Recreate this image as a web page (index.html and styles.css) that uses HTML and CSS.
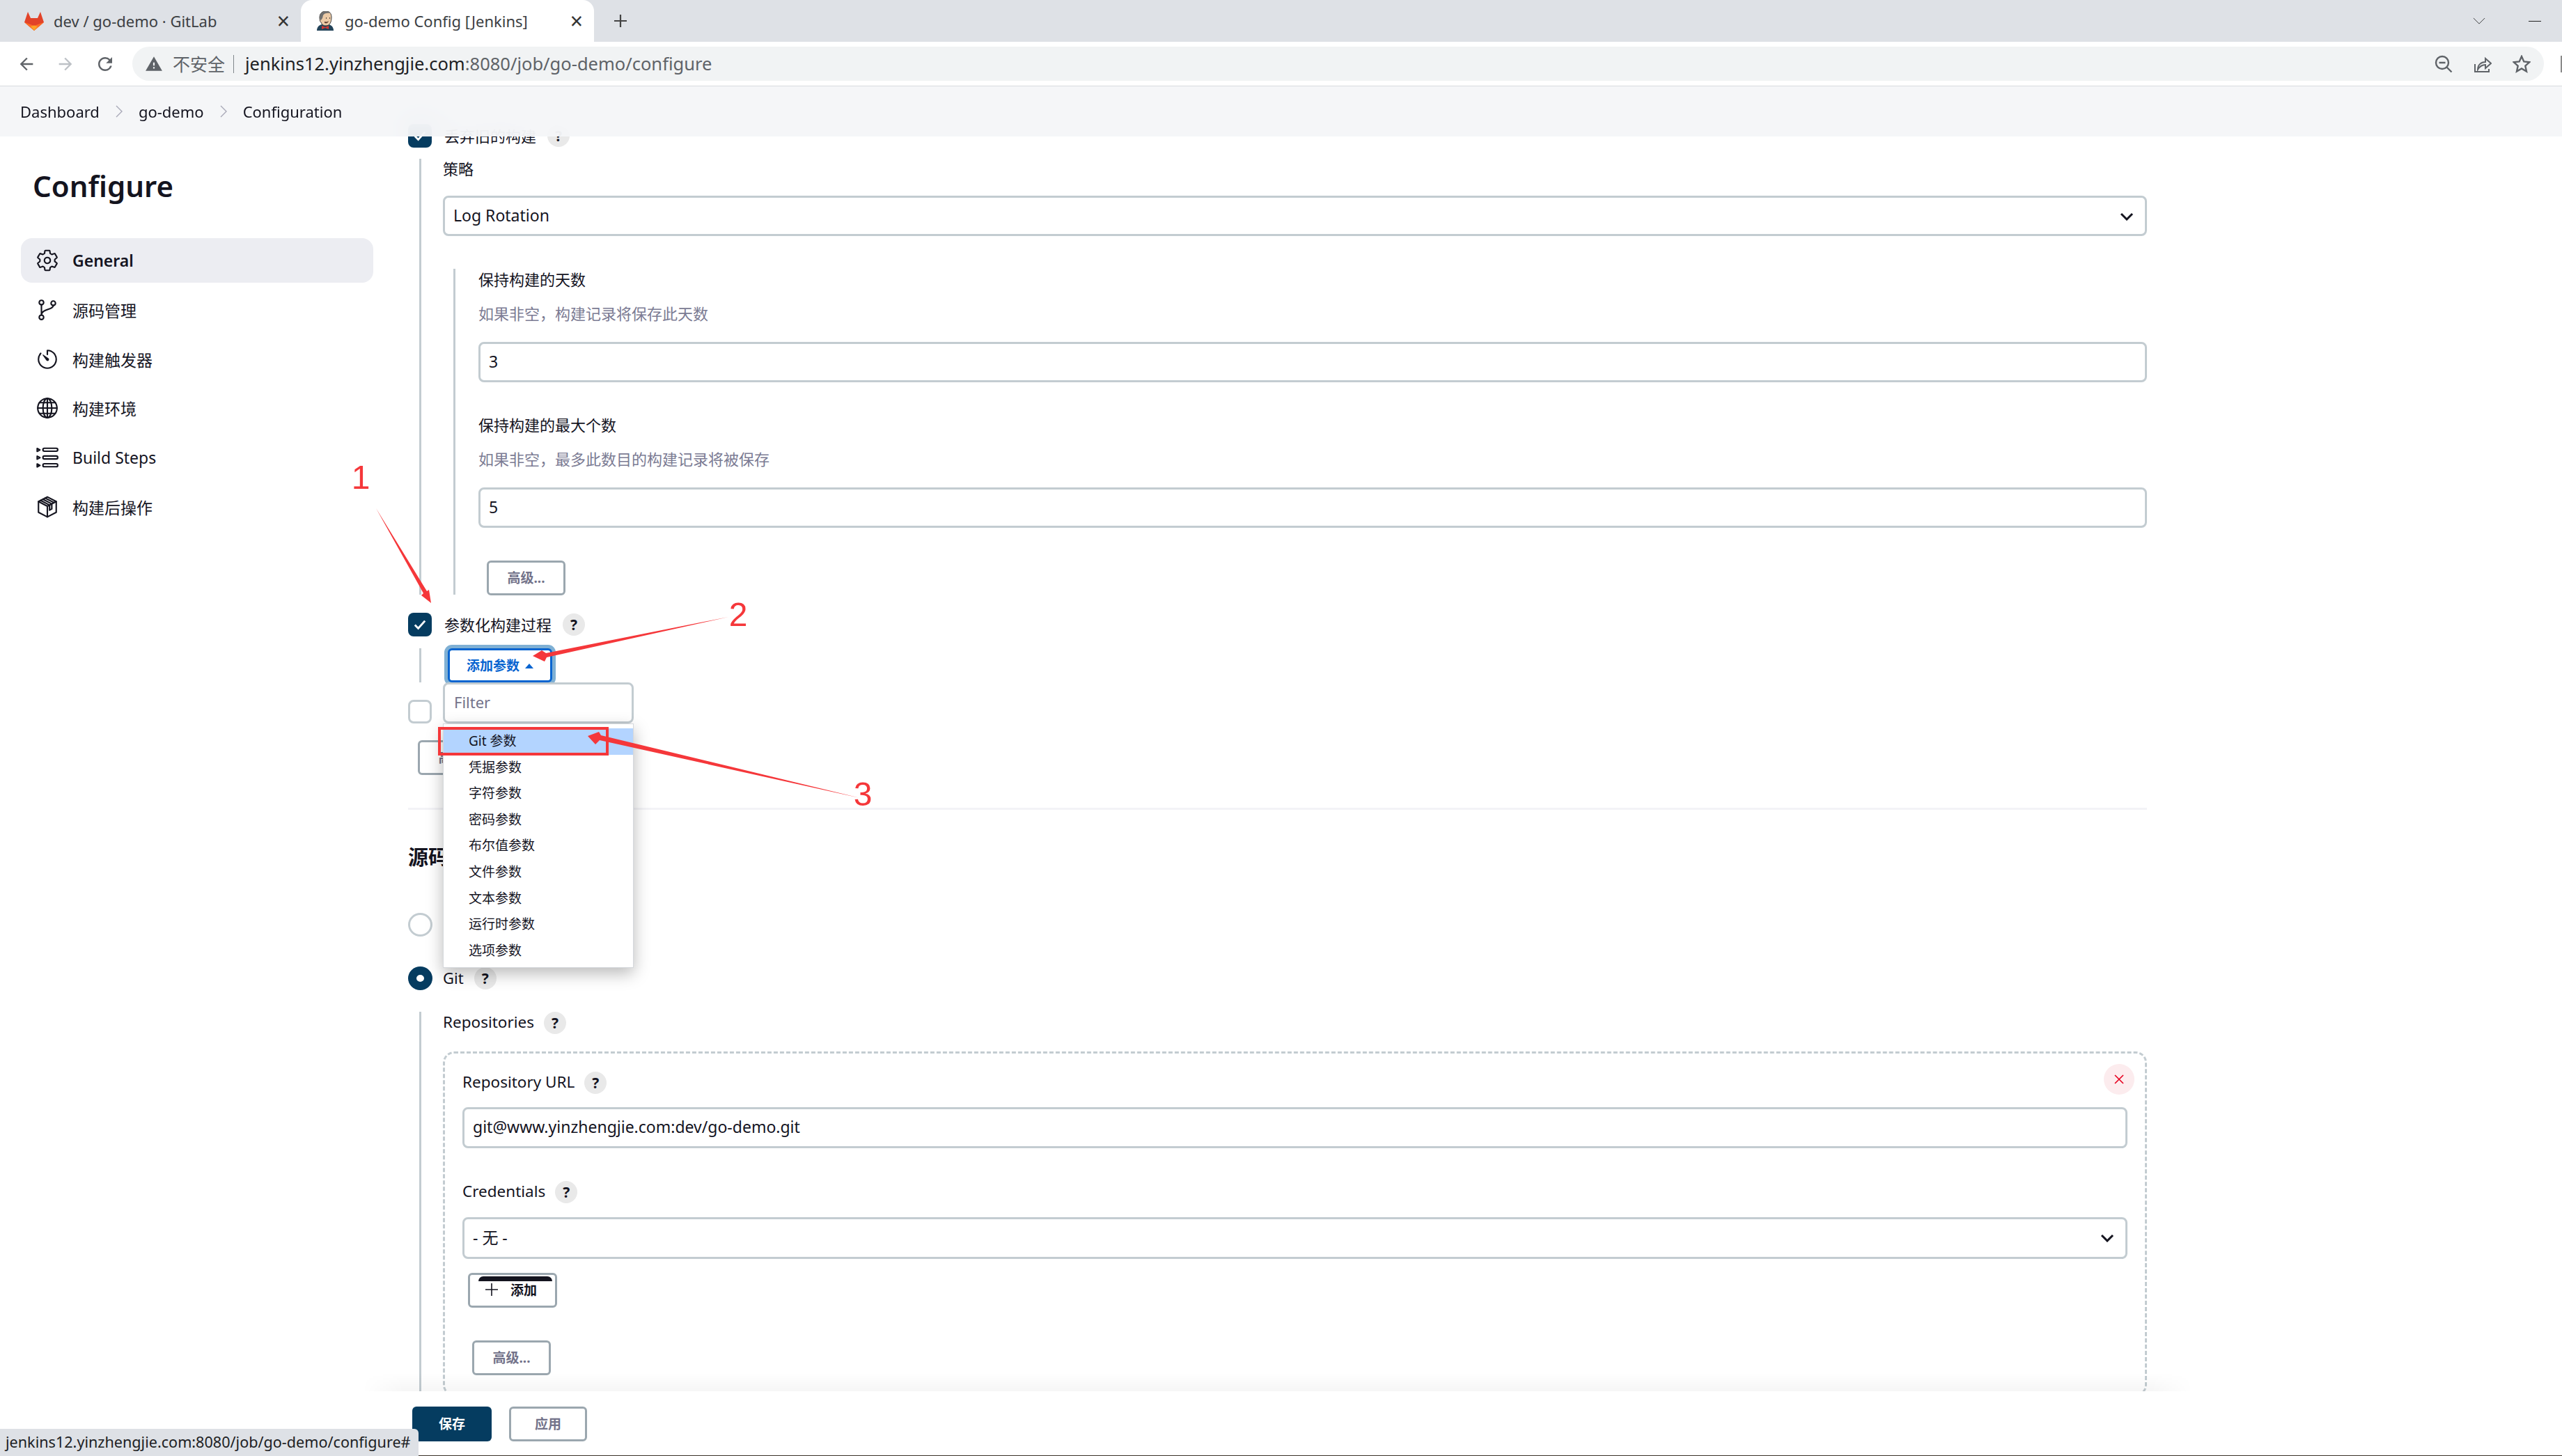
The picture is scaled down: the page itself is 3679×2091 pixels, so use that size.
FILE: index.html
```html
<!DOCTYPE html>
<html lang="zh-CN">
<head>
    <meta charset="UTF-8">
    <title>go-demo Config [Jenkins]</title>
    <link rel="stylesheet" href="styles.css">
</head>
<body>
    <div class="tabbar">
        <div class="tab tab-first">
            <svg class="favicon" viewBox="0 0 28 27"><path d="M5 0l4 9h10l4-9 5 15-14 12L0 15z" fill="#e24329"/><path d="M0 15l14 5 14-5-14 12z" fill="#fc6d26"/><path d="M9 21l5-1.5 5 1.5-5 6z" fill="#fca326"/></svg>
            <span class="tab-title">dev / go-demo · GitLab</span>
            <span class="tab-close">×</span>
        </div>
        <div class="tab tab-active">
            <svg class="favicon jenkins" viewBox="0 0 24 28"><path d="M0 28c0-5 3-8 7-9h10c4 1 7 4 7 9z" fill="#23445a"/><path d="M4 9C4 3 8 0 13 0s8 3 8 9c0 6-2 12-8 12-4 0-6-2-7-5-1 0-2-3-2-7z" fill="#eccaa6" stroke="#3c3c3c" stroke-width="1"/><path d="M4 11C3 4 8 0 13 0c3 0 5 1 6 3-4-1-9 0-10 3l-1 4-2 3z" fill="#6f6f6f"/><path d="M11 15c3 1 5 0 6-1-1 3-3 4-6 3z" fill="#5a3a2c"/><path d="M13 10h1M18 10h1" stroke="#222" stroke-width="1.4"/><path d="M7 21l5 2 5-2v5l-5-2-5 2z" fill="#d33833"/></svg>
            <span class="tab-title">go-demo Config [Jenkins]</span>
            <span class="tab-close">×</span>
        </div>
        <svg class="tab-plus" viewBox="0 0 20 20"><path d="M10 1v18M1 10h18" stroke="#444" stroke-width="2.2"/></svg>
        <div class="window-controls">
            <svg class="tab-list" viewBox="0 0 20 12"><path d="M1 1l9 9 9-9" fill="none" stroke="#333" stroke-width="1"/></svg>
            <span class="minimize"></span>
        </div>
    </div>

    <div class="addressbar">
        <svg class="nav-icon" viewBox="0 0 24 24" fill="#5f6368"><path d="M20 11H7.83l5.59-5.59L12 4l-8 8 8 8 1.41-1.41L7.83 13H20v-2z"/></svg>
        <svg class="nav-icon" viewBox="0 0 24 24" fill="#bdc1c6"><path d="M12 4l-1.41 1.41L16.17 11H4v2h12.17l-5.58 5.59L12 20l8-8z"/></svg>
        <svg class="nav-icon reload" viewBox="0 0 24 24" fill="#5f6368"><path d="M17.65 6.35A7.958 7.958 0 0012 4c-4.42 0-7.99 3.58-7.99 8s3.57 8 7.99 8c3.73 0 6.84-2.55 7.73-6h-2.08A5.99 5.99 0 0112 18c-3.31 0-6-2.69-6-6s2.69-6 6-6c1.66 0 3.14.69 4.22 1.78L13 11h7V4l-2.35 2.35z"/></svg>
        <div class="omnibox">
            <svg class="warn" viewBox="0 0 24 24" fill="#5f6368"><path d="M1 21h22L12 2 1 21zm12-3h-2v-2h2v2zm0-4h-2v-4h2v4z"/></svg>
            <span class="insecure">不安全</span>
            <span class="omni-sep"></span>
            <span class="url">jenkins12.yinzhengjie.com<span class="url-rest">:8080/job/go-demo/configure</span></span>
            <div class="omni-icons">
                <svg viewBox="0 0 26 26"><circle cx="11" cy="11" r="9" fill="none" stroke="#5f6368" stroke-width="2.4"/><path d="M6.5 11h9M17.5 17.5l7 7" stroke="#5f6368" stroke-width="2.4"/></svg>
                <svg viewBox="0 0 26 26"><path d="M2 13v11h20v-4" fill="none" stroke="#5f6368" stroke-width="2"/><path d="M6 21c0-7 5-11 11-11V5l8 7-8 7v-5c-5 0-8 2-11 7z" fill="none" stroke="#5f6368" stroke-width="2"/></svg>
                <svg viewBox="0 0 26 26"><path d="M13 2l3.3 7.4 8 .8-6 5.4 1.7 7.9-7-4-7 4 1.7-7.9-6-5.4 8-.8z" fill="none" stroke="#5f6368" stroke-width="2.4"/></svg>
            </div>
        </div>
        <span class="menu-stub"></span>
    </div>

    <div class="page">
        <div class="breadcrumb">
            <span>Dashboard</span>
            <svg class="crumb-sep" viewBox="0 0 10 18"><path d="M1 1l8 8-8 8" fill="none" stroke="#a9a9b8" stroke-width="1.4"/></svg>
            <span>go-demo</span>
            <svg class="crumb-sep" viewBox="0 0 10 18"><path d="M1 1l8 8-8 8" fill="none" stroke="#a9a9b8" stroke-width="1.4"/></svg>
            <span>Configuration</span>
        </div>

        <aside class="sidebar">
            <h1>Configure</h1>
            <ul class="side-nav">
                <li class="active">
                    <svg viewBox="0 0 512 512"><path d="M262.29 192.31a64 64 0 1057.4 57.4 64.13 64.13 0 00-57.4-57.4zM416.39 256a154.34 154.34 0 01-1.53 20.79l45.21 35.46a10.81 10.81 0 012.45 13.75l-42.77 74a10.81 10.81 0 01-13.14 4.59l-44.9-18.08a16.11 16.11 0 00-15.17 1.75A164.48 164.48 0 01325 400.8a15.94 15.94 0 00-8.82 12.14l-6.73 47.89a11.08 11.08 0 01-10.68 9.17h-85.54a11.11 11.11 0 01-10.69-8.87l-6.72-47.82a16.07 16.07 0 00-9-12.22 155.3 155.3 0 01-21.46-12.57 16 16 0 00-15.11-1.71l-44.89 18.07a10.81 10.81 0 01-13.14-4.58l-42.77-74a10.8 10.8 0 012.45-13.75l38.21-30a16.05 16.05 0 006-14.08c-.36-4.17-.58-8.33-.58-12.5s.21-8.27.58-12.35a16 16 0 00-6.07-13.94l-38.19-30A10.81 10.81 0 0149.48 186l42.77-74a10.81 10.81 0 0113.14-4.59l44.9 18.08a16.11 16.11 0 0015.17-1.75A164.48 164.48 0 01187 111.2a15.94 15.94 0 008.82-12.14l6.73-47.89A11.08 11.08 0 01213.23 42h85.54a11.11 11.11 0 0110.69 8.87l6.72 47.82a16.07 16.07 0 009 12.22 155.3 155.3 0 0121.46 12.57 16 16 0 0015.11 1.71l44.89-18.07a10.81 10.81 0 0113.14 4.58l42.77 74a10.8 10.8 0 01-2.45 13.75l-38.21 30a16.05 16.05 0 00-6.05 14.08c.33 4.14.55 8.3.55 12.47z"/></svg>
                    <span>General</span>
                </li>
                <li>
                    <svg viewBox="0 0 512 512"><circle cx="128" cy="416" r="48"/><circle cx="128" cy="96" r="48"/><circle cx="384" cy="112" r="48"/><path d="M128 144v224M384 160c0 100-256 70-256 208"/></svg>
                    <span>源码管理</span>
                </li>
                <li>
                    <svg viewBox="0 0 512 512"><path d="M112.91 128A191.85 191.85 0 0064 254c-1.18 106.35 85.65 193.8 192 194 106.2.2 192-85.83 192-192 0-104.54-83.55-189.61-187.5-192a4.36 4.36 0 00-4.5 4.37V152"/><path class="solid" d="M233.38 278.63l-79-113a8.13 8.13 0 0111.32-11.32l113 79a32.5 32.5 0 01-37.25 53.26 33.21 33.21 0 01-8.07-7.94z"/></svg>
                    <span>构建触发器</span>
                </li>
                <li>
                    <svg viewBox="0 0 512 512"><circle cx="256" cy="256" r="208"/><ellipse cx="256" cy="256" rx="96" ry="208"/><path d="M256 48v416M48 256h416M85 140h342M85 372h342"/></svg>
                    <span>构建环境</span>
                </li>
                <li>
                    <svg viewBox="0 0 512 512"><rect x="160" y="56" width="320" height="64" rx="32"/><rect x="160" y="224" width="320" height="64" rx="32"/><rect x="160" y="392" width="320" height="64" rx="32"/><path d="M36 60l60 32-60 32zM36 228l60 32-60 32zM36 396l60 32-60 32z"/></svg>
                    <span>Build Steps</span>
                </li>
                <li>
                    <svg viewBox="0 0 512 512"><path d="M256 40 64 140v232l192 100 192-100V140z"/><path d="M64 140l192 100 192-100M256 240v232M160 90l192 100v110l-48 26V216L112 116M208 64l192 100"/></svg>
                    <span>构建后操作</span>
                </li>
            </ul>
        </aside>

        <main class="config">
            <div class="check-row">
                <span class="checkbox checked"><svg viewBox="0 0 20 20"><path d="M4 10.5l4 4 8-9" fill="none" stroke="#fff" stroke-width="2.4"/></svg></span>
                <span class="row-text">丢弃旧的构建</span>
                <span class="help">?</span>
            </div>

            <div class="indent rotate-block">
                <div class="field-label">策略</div>
                <div class="select select-strategy">
                    <select><option>Log Rotation</option></select>
                    <svg viewBox="0 0 20 12"><path d="M2 2l8 8 8-8" fill="none" stroke="#14141f" stroke-width="3"/></svg>
                </div>
                <div class="inner">
                    <div class="inner-label">保持构建的天数</div>
                    <div class="hint">如果非空，构建记录将保存此天数</div>
                    <input class="text-input inner-input" type="text" value="3">
                    <div class="inner-label second">保持构建的最大个数</div>
                    <div class="hint">如果非空，最多此数目的构建记录将被保存</div>
                    <input class="text-input inner-input" type="text" value="5">
                    <button class="btn advanced inner-advanced">高级...</button>
                </div>
            </div>

            <div class="check-row param-row">
                <span class="checkbox checked"><svg viewBox="0 0 20 20"><path d="M4 10.5l4 4 8-9" fill="none" stroke="#fff" stroke-width="2.4"/></svg></span>
                <span class="row-text">参数化构建过程</span>
                <span class="help">?</span>
            </div>

            <div class="indent param-block">
                <button class="btn add-param">添加参数<i class="caret"></i></button>
                <div class="dropdown">
                    <input class="filter" type="text" placeholder="Filter">
                    <ul class="dropdown-menu">
                        <li class="hover">Git 参数</li>
                        <li>凭据参数</li>
                        <li>字符参数</li>
                        <li>密码参数</li>
                        <li>布尔值参数</li>
                        <li>文件参数</li>
                        <li>文本参数</li>
                        <li>运行时参数</li>
                        <li>选项参数</li>
                    </ul>
                </div>
            </div>

            <div class="check-row unchecked-row">
                <span class="checkbox"></span>
            </div>
            <button class="btn advanced hidden-advanced">高级...</button>

            <div class="divider"></div>
            <h2 class="section-title">源码管理</h2>

            <div class="check-row radio-none">
                <span class="radio"></span>
            </div>
            <div class="check-row radio-git">
                <span class="radio selected"></span>
                <span class="row-text">Git</span>
                <span class="help">?</span>
            </div>

            <div class="indent git-block">
                <div class="label-row"><span class="row-text">Repositories</span> <span class="help">?</span></div>
                <div class="repo-box">
                    <span class="repo-close"><svg viewBox="0 0 14 14"><path d="M1 1l12 12M13 1L1 13" stroke="#e6001f" stroke-width="1.6"/></svg></span>
                    <div class="label-row"><span class="row-text">Repository URL</span> <span class="help">?</span></div>
                    <input class="text-input repo-url" type="text" value="git@www.yinzhengjie.com:dev/go-demo.git">
                    <div class="label-row cred-label"><span class="row-text">Credentials</span> <span class="help">?</span></div>
                    <div class="select select-cred">
                        <select><option>- 无 -</option></select>
                        <svg viewBox="0 0 20 12"><path d="M2 2l8 8 8-8" fill="none" stroke="#14141f" stroke-width="3"/></svg>
                    </div>
                    <button class="btn add-cred"><svg viewBox="0 0 18 18"><path d="M9 0v18M0 9h18" stroke="#14141f" stroke-width="1.6"/></svg>添加</button>
                    <button class="btn advanced repo-advanced">高级...</button>
                </div>
            </div>
        </main>
    </div>

    <footer class="bottom-bar">
        <button class="btn save">保存</button>
        <button class="btn advanced apply">应用</button>
    </footer>

    <div class="status-bubble">jenkins12.yinzhengjie.com:8080/job/go-demo/configure#</div>

    <!-- 截图上的红色标注 -->
    <svg class="notes" viewBox="0 0 3679 2091">
        <text x="518" y="702">1</text>
        <text x="1060" y="899">2</text>
        <text x="1239" y="1157">3</text>
        <path d="M540 730 L613 849 L616 847 L619 866 L605 855 L608 852 Z"/>
        <path d="M1046 886 L784 938 L778 934 L765 942 L782 950 L785 944 Z"/>
        <path d="M1235 1146 L863 1056 L860 1051 L844 1057 L855 1069 L861 1063 Z"/>
        <rect x="631" y="1046" width="241" height="37"/>
    </svg>
</body>
</html>
```

FILE: styles.css
```css
* {
    box-sizing: border-box;
    margin: 0;
    padding: 0;
}

body {
    width: 3679px;
    height: 2091px;
    overflow: hidden;
    position: relative;
    display: flex;
    flex-direction: column;
    background: #fff;
    color: #14141f;
    font-family: "Noto Sans", "Noto Sans CJK SC", sans-serif;
    font-size: 22px;
}

/* browser chrome */
.tabbar {
    height: 60px;
    flex: none;
    display: flex;
    align-items: center;
    background: #dee1e6;
}

.tab {
    height: 60px;
    display: flex;
    align-items: center;
    font-size: 22px;
    color: #3c4043;
    position: relative;
}

.tab-first {
    width: 432px;
    padding-left: 35px;
}

.tab-active {
    width: 421px;
    padding-left: 23px;
    background: #fff;
    border-radius: 16px 16px 0 0;
}

.favicon {
    width: 28px;
    height: 27px;
    margin: 0 14px 0 0;
    flex: none;
    position: relative;
    top: 0;
}

.favicon.jenkins {
    width: 24px;
    height: 28px;
    margin-right: 16px;
}

.tab-close {
    position: absolute;
    right: 16px;
    top: 12px;
    font-size: 32px;
    line-height: 36px;
    color: #333;
}

.tab-plus {
    width: 20px;
    height: 20px;
    margin-left: 28px;
}

.window-controls {
    margin-left: auto;
    display: flex;
    align-items: center;
    padding-right: 30px;
    gap: 62px;
}

.tab-list {
    width: 18px;
    height: 11px;
}

.minimize {
    width: 18px;
    height: 1px;
    background: #222;
}

.addressbar {
    height: 64px;
    flex: none;
    display: flex;
    align-items: center;
    padding-left: 24px;
    border-bottom: 1px solid #d8dade;
    background: #fff;
}

.nav-icon {
    width: 28px;
    height: 28px;
    margin-right: 28px;
    flex: none;
}

.nav-icon.reload {
    width: 30px;
    height: 30px;
    margin-right: 24px;
}

.omnibox {
    width: 3463px;
    height: 49px;
    display: flex;
    align-items: center;
    padding-left: 18px;
    border-radius: 25px;
    background: #f1f3f4;
}

.warn {
    width: 26px;
    height: 26px;
    margin-right: 14px;
}

.insecure {
    color: #5f6368;
    font-size: 25px;
    padding-bottom: 2px;
}

.omni-sep {
    width: 1px;
    height: 26px;
    margin: 0 16px 0 12px;
    background: #80868b;
}

.url {
    color: #202124;
    font-size: 25.5px;
    padding-bottom: 2px;
}

.url-rest {
    color: #5f6368;
}

.omni-icons {
    margin-left: auto;
    display: flex;
    align-items: center;
    padding-right: 19px;
    gap: 30px;
}

.omni-icons svg {
    width: 26px;
    height: 26px;
}

.menu-stub {
    width: 2px;
    height: 24px;
    margin-left: 24px;
    background: #8a8a8a;
}

/* page */
.page {
    flex: 1;
    min-height: 0;
    position: relative;
    display: flex;
    overflow: hidden;
}

.breadcrumb {
    position: absolute;
    top: 0;
    left: 0;
    right: 0;
    height: 72px;
    z-index: 3;
    display: flex;
    align-items: center;
    padding-left: 29px;
    background: rgba(244, 245, 247, 0.92);
    backdrop-filter: blur(24px);
    font-size: 22px;
}

.crumb-sep {
    width: 10px;
    height: 18px;
    margin: 0 23px;
}

.sidebar {
    width: 586px;
    flex: none;
    padding: 114px 0 0 30px;
}

.sidebar h1 {
    font-size: 42px;
    line-height: 58px;
    font-weight: 600;
    padding-left: 17px;
    margin-bottom: 46px;
}

.side-nav {
    list-style: none;
    width: 506px;
}

.side-nav li {
    height: 64px;
    margin-bottom: 6.8px;
    display: flex;
    align-items: center;
    padding-left: 21px;
    border-radius: 16px;
    font-size: 23px;
}

.side-nav li.active {
    background: #ecedf2;
    font-weight: 600;
}

.side-nav svg {
    width: 34px;
    height: 34px;
    margin-right: 19px;
    fill: none;
    stroke: #14141f;
    stroke-width: 32;
    stroke-linecap: round;
    stroke-linejoin: round;
}

.side-nav svg .solid {
    fill: #14141f;
    stroke: none;
}

.config {
    width: 2497px;
    flex: none;
    padding-top: 54px;
}

.check-row {
    height: 34px;
    display: flex;
    align-items: center;
    gap: 18px;
}

.check-row .help {
    margin-left: -2px;
}

.row-text {
    padding-bottom: 3px;
}

.checkbox {
    width: 34px;
    height: 34px;
    flex: none;
    display: flex;
    align-items: center;
    justify-content: center;
    border: 3px solid #c3ccd1;
    border-radius: 8px;
    background: #fff;
}

.checkbox.checked {
    border: none;
    background: #053c60;
}

.checkbox svg {
    width: 24px;
    height: 24px;
}

.help {
    width: 32px;
    height: 32px;
    flex: none;
    display: inline-flex;
    align-items: center;
    justify-content: center;
    border-radius: 50%;
    background: #e9e9e9;
    font-size: 21px;
    font-weight: 700;
}

.indent {
    margin-left: 16px;
    border-left: 3px solid #c3ccd1;
    padding-left: 31px;
    position: relative;
}

.rotate-block {
    margin-top: 16px;
    height: 626px;
}

.field-label {
    height: 32px;
    line-height: 29px;
}

.select {
    position: relative;
}

.select select {
    width: 100%;
    height: 58px;
    padding: 0 0 3px 12px;
    appearance: none;
    border: 3px solid #c3ccd1;
    border-radius: 8px;
    background: #fff;
    color: #14141f;
    font: inherit;
    font-size: 23px;
}

.select svg {
    position: absolute;
    right: 19px;
    top: 24px;
    width: 20px;
    height: 12px;
}

.select-strategy {
    margin-top: 21px;
}

.inner {
    margin-top: 47px;
    margin-left: 15px;
    border-left: 3px solid #c3ccd1;
    padding-left: 33px;
    height: 468px;
}

.inner-label {
    height: 34px;
    line-height: 31px;
}

.inner-label.second {
    margin-top: 46px;
}

.hint {
    height: 34px;
    line-height: 31px;
    margin-top: 15px;
    color: #7b7b93;
}

.text-input {
    display: block;
    width: 100%;
    height: 58px;
    padding: 0 0 3px 12px;
    border: 3px solid #c3ccd1;
    border-radius: 8px;
    color: #14141f;
    font: inherit;
    font-size: 23px;
}

.inner-input {
    margin-top: 22px;
}

.btn {
    display: block;
    background: #fff;
    font-family: inherit;
    font-size: 19px;
    font-weight: 700;
    padding-bottom: 2px;
    cursor: pointer;
}

.advanced {
    width: 113px;
    height: 50px;
    border: 3px solid #9ba7af;
    border-radius: 6px;
    color: #73738a;
}

.inner-advanced {
    margin: 47px 0 0 12px;
}

.param-row {
    margin-top: 26px;
}

.param-block {
    margin-top: 17px;
    height: 49px;
    z-index: 2;
}

.add-param {
    width: 150px;
    height: 49px;
    margin-left: 7px;
    border: 3px solid #0764d0;
    border-radius: 6px;
    box-shadow: 0 0 0 5px #7fb0d4;
    color: #0764d0;
}

.caret {
    display: inline-block;
    margin-left: 8px;
    vertical-align: 3px;
    border-left: 6px solid transparent;
    border-right: 6px solid transparent;
    border-bottom: 7px solid #0764d0;
}

.dropdown {
    position: absolute;
    left: 31px;
    top: 49px;
    width: 274px;
}

.filter {
    display: block;
    width: 100%;
    height: 59px;
    padding: 0 0 3px 13px;
    border: 3px solid #c3ccd1;
    border-radius: 8px;
    font: inherit;
    color: #14141f;
}

.filter::placeholder {
    color: #73738a;
}

.dropdown-menu {
    list-style: none;
    background: #fff;
    border: 1px solid #d5d8dc;
    padding: 6px 0 5px;
    box-shadow: 0 8px 22px rgba(0, 0, 0, 0.28);
}

.dropdown-menu li {
    height: 37.6px;
    line-height: 37.6px;
    padding-left: 36px;
    font-size: 19px;
}

.dropdown-menu li.hover {
    background: #b3d4ff;
}

.unchecked-row {
    margin-top: 24px;
    height: 35px;
}

.hidden-advanced {
    margin: 24px 0 0 14px;
}

.divider {
    height: 3px;
    margin-top: 47px;
    background: #f3f3f7;
}

.section-title {
    height: 36px;
    margin-top: 50px;
    font-size: 29px;
    line-height: 36px;
    font-weight: 700;
}

.radio {
    width: 35px;
    height: 34px;
    flex: none;
    border: 3px solid #c3ccd1;
    border-radius: 50%;
}

.radio.selected {
    border: 12px solid #053c60;
    background: #fff;
}

.radio-none {
    margin-top: 62px;
}

.radio-git {
    margin-top: 43px;
    gap: 15px;
}

.radio-git .help {
    margin-left: 0;
}

.git-block {
    margin-top: 31px;
    padding-bottom: 60px;
}

.label-row {
    height: 32px;
    display: flex;
    align-items: center;
    gap: 14px;
    font-size: 22.5px;
}

.repo-box {
    position: relative;
    margin-top: 25px;
    border: 3px dashed #c3ccd1;
    border-radius: 16px;
    padding: 26px 25px 27px;
}

.repo-close {
    position: absolute;
    right: 15px;
    top: 15px;
    width: 44px;
    height: 44px;
    display: flex;
    align-items: center;
    justify-content: center;
    border-radius: 50%;
    background: #fcecee;
}

.repo-close svg {
    width: 14px;
    height: 14px;
}

.repo-url {
    margin-top: 19px;
    height: 59px;
}

.cred-label {
    margin-top: 47px;
}

.select-cred {
    margin-top: 20px;
}

.select-cred select {
    height: 60px;
}

.add-cred {
    position: relative;
    width: 128px;
    height: 50px;
    margin: 20px 0 0 8px;
    display: flex;
    align-items: center;
    padding-left: 22px;
    border: 3px solid #9ba7af;
    border-radius: 6px;
    color: #14141f;
}

/* 按钮顶上那条黑边 */
.add-cred::before {
    content: "";
    position: absolute;
    left: 12px;
    right: 4px;
    top: 2px;
    height: 7px;
    background: #14141f;
    border-radius: 8px 8px 0 0;
}

.add-cred svg {
    width: 18px;
    height: 18px;
    margin-right: 18px;
}

.repo-advanced {
    margin: 47px 0 0 14px;
}

/* bottom */
.bottom-bar {
    height: 93px;
    flex: none;
    position: relative;
    display: flex;
    gap: 25px;
    padding: 22px 0 0 592px;
    background: #fff;
    border-bottom: 1px solid #3a3028;
}

.bottom-bar::before {
    content: "";
    position: absolute;
    left: 520px;
    right: 530px;
    top: -26px;
    height: 26px;
    background: linear-gradient(rgba(0, 0, 0, 0), rgba(0, 0, 0, 0.035));
    -webkit-mask-image: linear-gradient(90deg, transparent, #000 60px, #000 calc(100% - 60px), transparent);
    mask-image: linear-gradient(90deg, transparent, #000 60px, #000 calc(100% - 60px), transparent);
}

.save {
    width: 114px;
    height: 50px;
    border: none;
    border-radius: 6px;
    background: #053c60;
    color: #fff;
}

.apply {
    width: 112px;
}

.status-bubble {
    position: absolute;
    left: 0;
    bottom: 0;
    width: 601px;
    height: 39px;
    padding-left: 8px;
    background: #dee1e6;
    border-top-right-radius: 6px;
    font-size: 21.6px;
    line-height: 37px;
    color: #202124;
    white-space: nowrap;
}

/* annotations */
.notes {
    position: absolute;
    left: 0;
    top: 0;
    width: 3679px;
    height: 2091px;
    z-index: 5;
    pointer-events: none;
}

.notes text {
    fill: #f5373a;
    font-family: "Liberation Sans", sans-serif;
    font-size: 48px;
    text-anchor: middle;
}

.notes path {
    fill: #f5373a;
}

.notes rect {
    fill: none;
    stroke: #f5373a;
    stroke-width: 4;
}
```
